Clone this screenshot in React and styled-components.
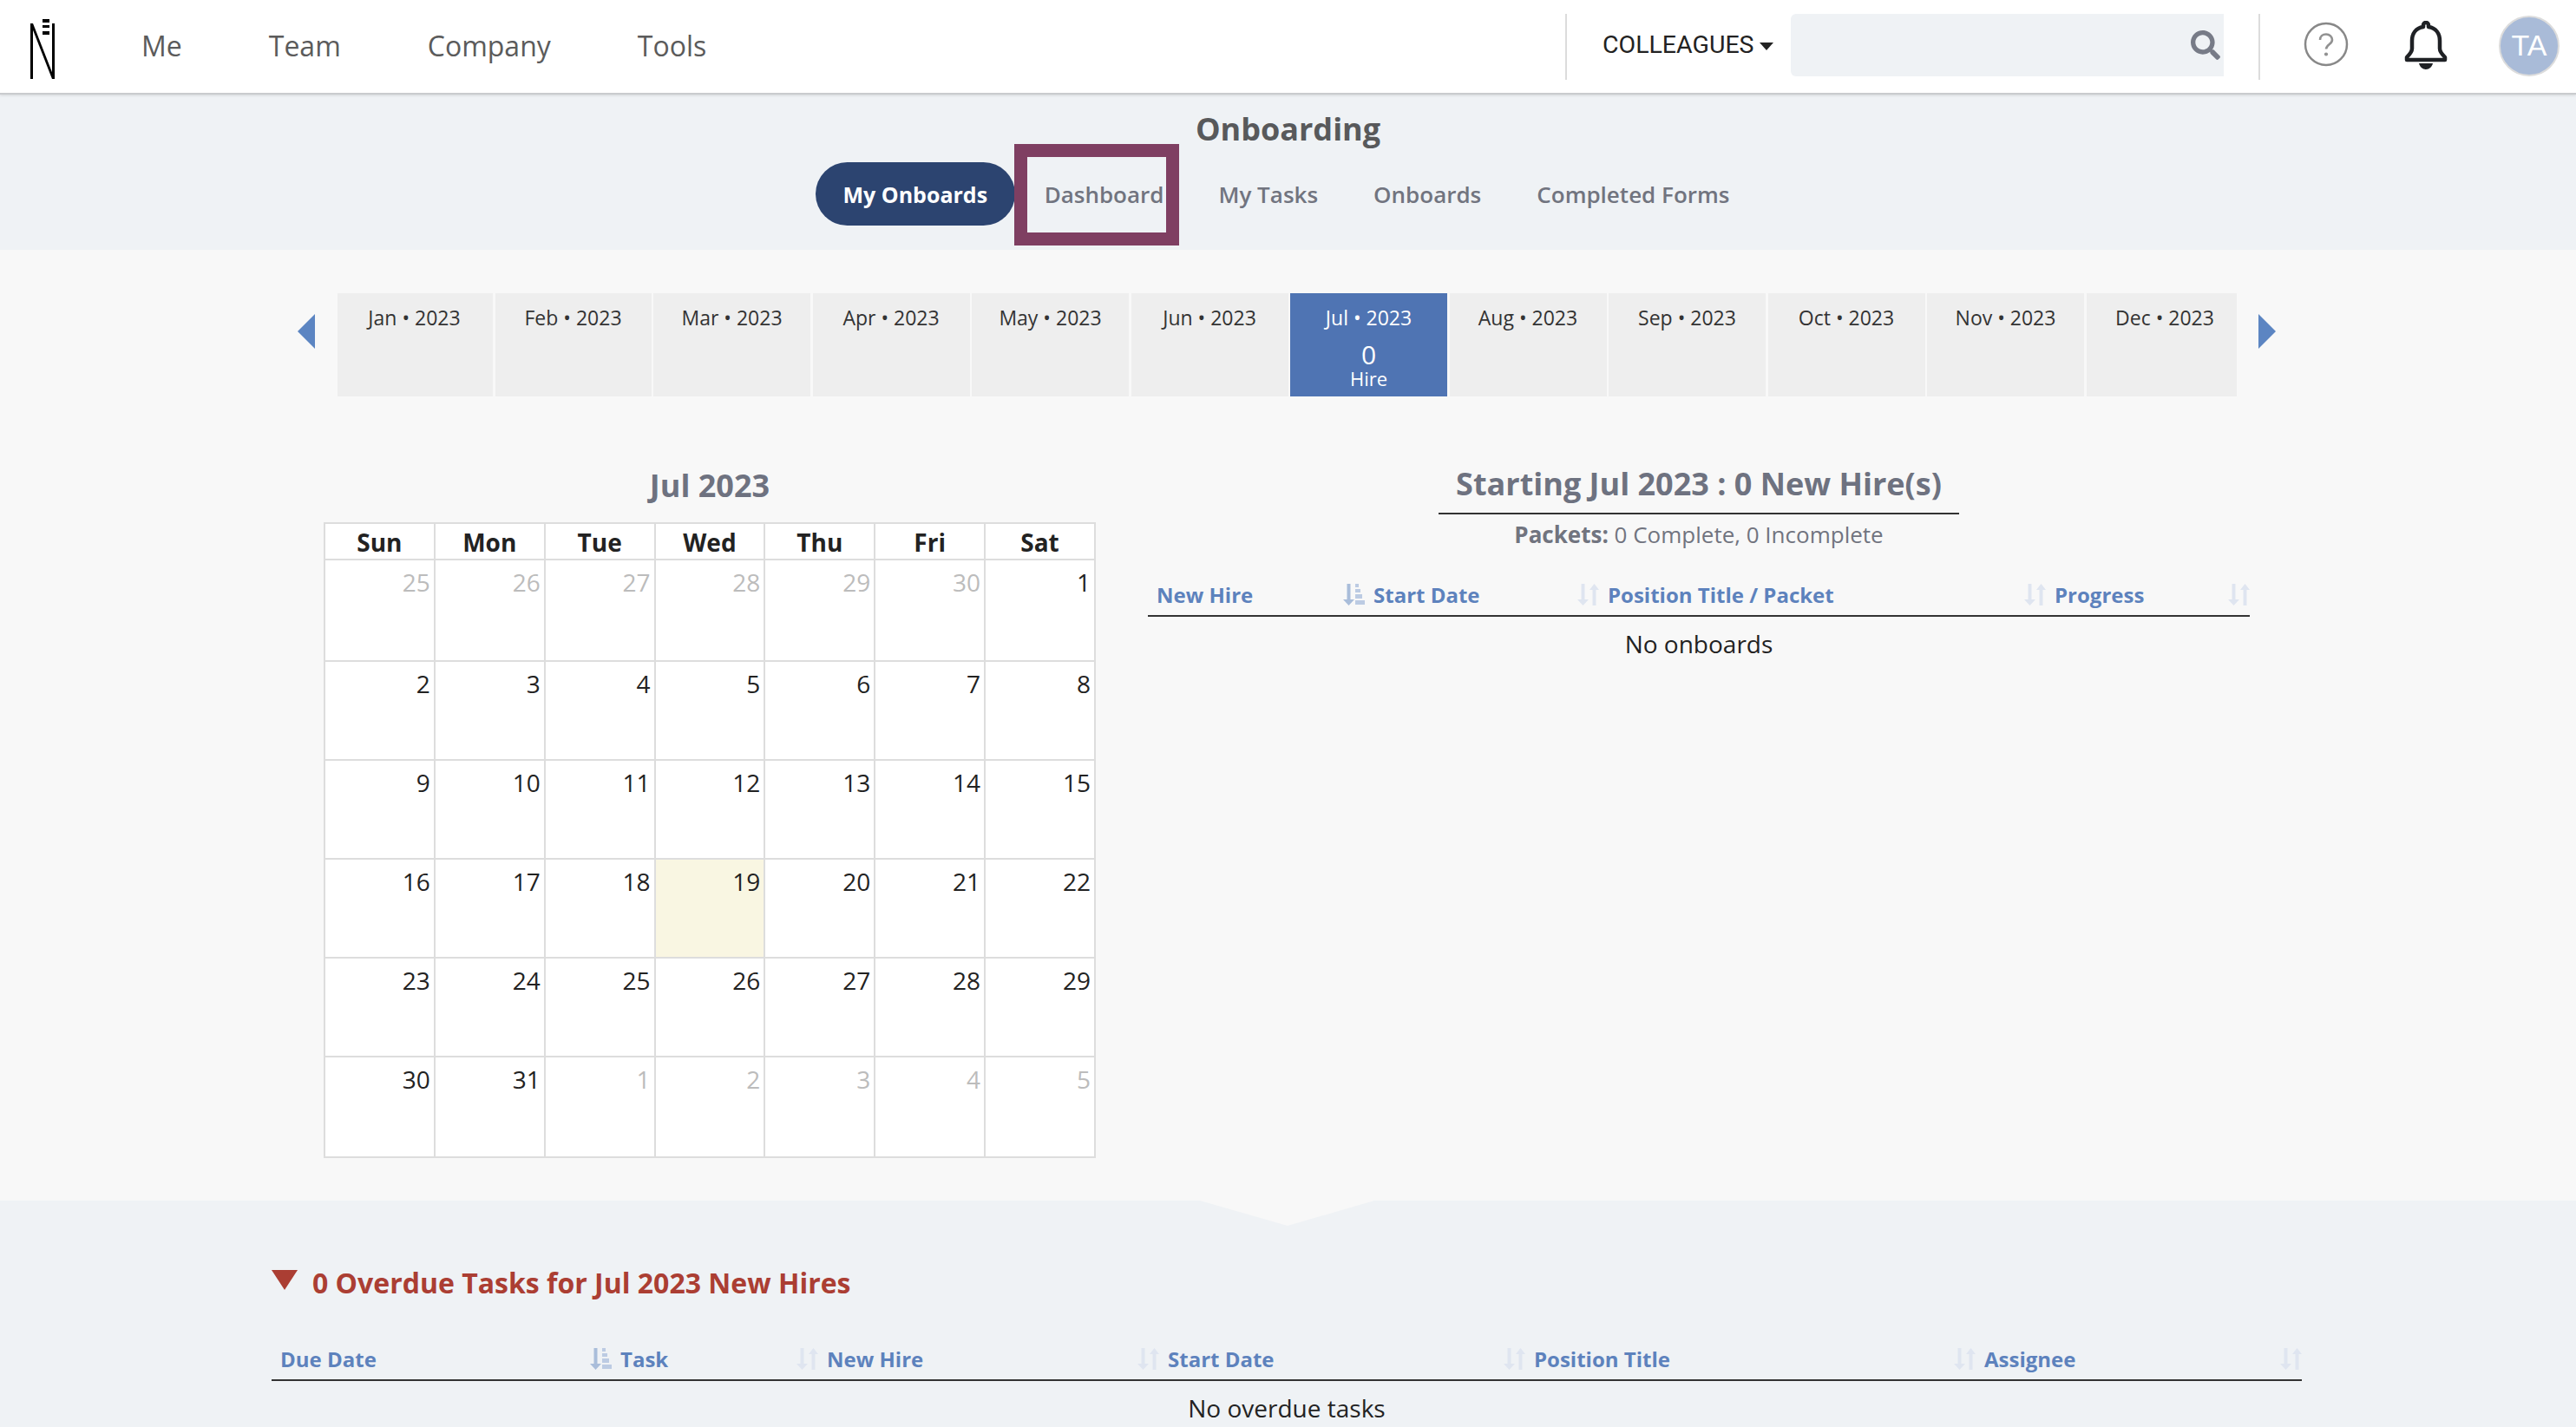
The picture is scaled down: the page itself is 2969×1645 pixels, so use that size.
import React from 'react';
import styled, { createGlobalStyle } from 'styled-components';
import { FaSearch } from 'react-icons/fa';

const GlobalStyle = createGlobalStyle`
  html, body {
    margin: 0;
    padding: 0;
    background: #f8f8f8;
    font-family: "Open Sans", "Liberation Sans", sans-serif;
    overflow: hidden;
  }
  * { box-sizing: border-box; }
`;

const Page = styled.div`
  width: 2969px;
  height: 1645px;
  display: flex;
  flex-direction: column;
`;

/* top bar */
const TopBar = styled.header`
  height: 109px;
  flex: none;
  display: flex;
  align-items: center;
  background: #fff;
  border-bottom: 2px solid #c9cbce;
  box-shadow: 0 1px 3px rgba(0, 0, 0, 0.12);
  position: relative;
  z-index: 2;
`;

const Logo = styled.svg`
  width: 40px;
  height: 76px;
  margin-left: 30px;
  flex: none;
`;

const MainNav = styled.nav`
  display: flex;
  gap: 100px;
  margin: -1px 0 0 93px;
`;

const NavLink = styled.a`
  font-size: 32px;
  color: #5b5b5b;
  line-height: 44px;
`;

const TopRight = styled.div`
  margin-left: auto;
  display: flex;
  align-items: center;
  height: 76px;
`;

const Divider = styled.span`
  width: 2px;
  height: 76px;
  background: #dcdcdc;
  flex: none;
`;

const ScopeButton = styled.div`
  display: flex;
  align-items: center;
  gap: 6px;
  margin: 0 0 4px 41px;
  width: 217px;
  font-family: Roboto, "Liberation Sans", sans-serif;
  font-size: 28.500px;
  color: #222;
`;

const Caret = styled.span`
  width: 0;
  height: 0;
  margin-top: 3px;
  border-left: 8px solid transparent;
  border-right: 8px solid transparent;
  border-top: 9px solid #222;
`;

const SearchBox = styled.div`
  width: 499px;
  height: 72px;
  background: #eff2f5;
  border-radius: 6px 0 0 6px;
  display: flex;
  align-items: center;
  justify-content: flex-end;
  padding-right: 4px;
  margin: 0 40px 4px 0;
  color: #777b87;
`;

const HelpIcon = styled.svg`
  width: 52px;
  height: 52px;
  margin: 0 0 5px 50px;
  flex: none;
`;

const BellIcon = styled.svg`
  width: 50px;
  height: 56px;
  margin: 0 0 3px 64px;
  flex: none;
`;

const Avatar = styled.div`
  width: 70px;
  height: 70px;
  border-radius: 50%;
  background: #a9bbd8;
  border: 2px solid #dcdcdc;
  color: #fff;
  font-family: "Liberation Sans", sans-serif;
  font-size: 34px;
  display: flex;
  align-items: center;
  justify-content: center;
  margin: 0 19px 2px 59px;
`;

/* onboarding sub header */
const SubHeader = styled.section`
  height: 179px;
  flex: none;
  background: #eff2f5;
  display: flex;
  flex-direction: column;
  align-items: center;
`;

const PageTitle = styled.h1`
  margin: 1px 0 0;
  font-size: 36px;
  line-height: 77px;
  font-weight: 700;
  color: #58595b;
`;

const Tabs = styled.div`
  align-self: flex-start;
  margin: 0 0 0 940px;
  display: flex;
  align-items: center;
`;

const Tab = styled.a`
  position: relative;
  height: 73px;
  display: flex;
  align-items: center;
  padding: ${p => p.$pad || '0 32px'};
  border-radius: 37px;
  font-size: ${p => (p.$active ? 25 : 26)}px;
  font-weight: ${p => (p.$active ? 700 : 600)};
  color: ${p => (p.$active ? '#fff' : '#71747f')};
  background: ${p => (p.$active ? '#2c4470' : 'transparent')};
`;

const Highlight = styled.span`
  position: absolute;
  left: -1px;
  top: -21px;
  width: 190px;
  height: 117px;
  border: 15px solid #7f3f62;
  pointer-events: none;
`;

/* month strip + calendar + list */
const Main = styled.main`
  flex: 1;
  padding-top: 50px;
`;

const MonthRow = styled.div`
  display: flex;
  align-items: flex-start;
  height: 119px;
  padding-left: 343px;
`;

const StripArrow = styled.span`
  width: 0;
  height: 0;
  margin-top: 24px;
  border-top: 20px solid transparent;
  border-bottom: 20px solid transparent;
  ${p => (p.$right
    ? 'border-left: 20px solid #5c85c2; margin-left: 25px;'
    : 'border-right: 20px solid #5c85c2; margin-right: 26px;')}
`;

const MonthStrip = styled.div`
  display: grid;
  grid-template-columns: 179px 180px repeat(9, 181px) 173px;
  column-gap: 2.5px;
  height: 119px;
`;

const MonthTile = styled.div`
  background: ${p => (p.$active ? '#4f74b3' : '#eeeeee')};
  color: ${p => (p.$active ? '#fff' : '#333')};
  text-align: center;
  padding-top: 11px;
  font-size: 23px;
  line-height: 34px;

  &:first-child { padding-right: 2px; }
  &:last-child { padding-left: 8px; }
`;

const TileCount = styled.div`
  font-size: 30px;
  line-height: 34px;
  margin-top: 9px;
`;

const TileLabel = styled.div`
  font-size: 22px;
  line-height: 20px;
`;

const Columns = styled.div`
  display: flex;
  align-items: flex-start;
  margin-top: 79px;
  padding-left: 373px;
`;

const CalendarBlock = styled.div`
  width: 890px;
  flex: none;
`;

const CalendarTitle = styled.h2`
  margin: 0;
  height: 66px;
  text-align: center;
  font-size: 36px;
  line-height: 48px;
  font-weight: 700;
  color: #6e7280;
`;

const CalendarTable = styled.table`
  width: 890px;
  border-collapse: collapse;
  table-layout: fixed;
  background: #fff;
`;

const DayHead = styled.th`
  height: 42px;
  padding: 2px 0 0;
  border: 2px solid #dddddd;
  font-size: 28px;
  line-height: 36px;
  font-weight: 700;
  color: #222;
`;

const DayCell = styled.td`
  height: ${p => (p.$tall ? 117 : p.$last ? 116 : 114)}px;
  padding: 5px 4px 0 0;
  border: 2px solid #dddddd;
  text-align: right;
  vertical-align: top;
  font-size: 28px;
  line-height: 40px;
  color: ${p => (p.$muted ? '#bcbcbc' : '#222')};
  background: ${p => (p.$today ? '#f9f6e2' : '#fff')};
`;

const ListBlock = styled.div`
  width: 1270px;
  margin-left: 60px;
  display: flex;
  flex-direction: column;
  align-items: center;
`;

const ListTitle = styled.h2`
  margin: -6px 0 0;
  width: 600px;
  height: 63px;
  border-bottom: 2px solid #333;
  text-align: center;
  font-size: 36px;
  line-height: 56px;
  font-weight: 700;
  color: #6e7280;
  white-space: nowrap;
`;

const PacketLine = styled.p`
  margin: 3px 0 0;
  font-size: 26px;
  line-height: 40px;
  color: #71747f;

  b { font-weight: 700; }
`;

const HeadRow = styled.div`
  display: grid;
  width: 100%;
  grid-template-columns: ${p => p.$cols};
  height: ${p => p.$h}px;
  border-bottom: 2px solid #333;
  align-items: center;
  margin-top: ${p => p.$top}px;
`;

const HeadCell = styled.div`
  display: flex;
  align-items: center;
  justify-content: space-between;
  padding-left: 10px;
  font-size: 24px;
  font-weight: 700;
  color: #5d82bd;
`;

const SortGlyph = styled.svg`
  width: 25px;
  height: 25px;
  flex: none;
`;

const EmptyRow = styled.div`
  text-align: center;
  font-size: 28px;
  line-height: 40px;
  color: #222;
  width: 100%;
  margin-top: ${p => p.$top}px;
`;

/* overdue section */
const Overdue = styled.section`
  position: relative;
  height: 261px;
  flex: none;
  background: #eff2f5;
  padding: 73px 316px 0 313px;

  &::before {
    content: '';
    position: absolute;
    top: 0;
    left: 1383px;
    width: 0;
    height: 0;
    border-left: 101px solid transparent;
    border-right: 100px solid transparent;
    border-top: 29px solid #f8f8f8;
  }
`;

const OverdueTitle = styled.h3`
  margin: 0;
  display: flex;
  align-items: center;
  gap: 17px;
  font-size: 32px;
  line-height: 44px;
  font-weight: 700;
  color: #ab3e33;
`;

const RedTriangle = styled.span`
  width: 0;
  height: 0;
  margin-top: -8px;
  border-left: 15px solid transparent;
  border-right: 15px solid transparent;
  border-top: 23px solid #ab3e33;
`;

function SortIcon({ active }) {
  const down = active ? '#a9bdda' : '#dfe5f0';
  return (
    <SortGlyph viewBox="0 0 25 25">
      <path d="M4.500 0h4v18H13l-6.500 7L0 18h4.500z" fill={down} />
      {active ? (
        <g fill="#bccbe3">
          <rect x="14" y="0" width="4" height="4" />
          <rect x="14" y="6" width="6" height="4" />
          <rect x="14" y="12" width="8" height="5" />
          <rect x="14" y="19" width="11" height="5" />
        </g>
      ) : (
        <path d="M17.500 25h4V7H25L19.500 0 14 7h3.500z" fill={down} />
      )}
    </SortGlyph>
  );
}

const months = ['Jan', 'Feb', 'Mar', 'Apr', 'May', 'Jun', 'Jul', 'Aug', 'Sep', 'Oct', 'Nov', 'Dec'];
const weekdays = ['Sun', 'Mon', 'Tue', 'Wed', 'Thu', 'Fri', 'Sat'];

const weeks = [
  [[25, 1], [26, 1], [27, 1], [28, 1], [29, 1], [30, 1], [1]],
  [[2], [3], [4], [5], [6], [7], [8]],
  [[9], [10], [11], [12], [13], [14], [15]],
  [[16], [17], [18], [19], [20], [21], [22]],
  [[23], [24], [25], [26], [27], [28], [29]],
  [[30], [31], [1, 1], [2, 1], [3, 1], [4, 1], [5, 1]],
];

const listHead = [['New Hire', true], ['Start Date'], ['Position Title / Packet'], ['Progress']];
const overdueHead = [['Due Date', true], ['Task'], ['New Hire'], ['Start Date'], ['Position Title'], ['Assignee']];

export default function App() {
  return (
    <Page>
      <GlobalStyle />
      <TopBar>
        <Logo viewBox="0 0 40 76">
          <g fill="#000">
            <rect x="5" y="11" width="3" height="64" />
            <rect x="30" y="11" width="3" height="64" />
            <path d="M5 11h3l25 64h-3z" />
            <rect x="19" y="6" width="8" height="4" />
            <rect x="19" y="13" width="8" height="3" />
            <rect x="19" y="20" width="8" height="4" />
          </g>
        </Logo>
        <MainNav>
          <NavLink>Me</NavLink>
          <NavLink>Team</NavLink>
          <NavLink>Company</NavLink>
          <NavLink>Tools</NavLink>
        </MainNav>
        <TopRight>
          <Divider />
          <ScopeButton>COLLEAGUES<Caret /></ScopeButton>
          <SearchBox><FaSearch size={34} /></SearchBox>
          <Divider />
          <HelpIcon viewBox="0 0 52 52">
            <circle cx="26" cy="26" r="24" fill="none" stroke="#888" strokeWidth="2.500" />
            <path d="M19 21c0-4 3-6.500 7-6.500s7 2.800 7 6.500c0 5-7 5.500-7 10.500" fill="none" stroke="#919191" strokeWidth="2.600" />
            <circle cx="26" cy="37.500" r="2.100" fill="#919191" />
          </HelpIcon>
          <BellIcon viewBox="0 0 50 56">
            <path d="M25 2a3 3 0 0 1 3 3v2c9 1.500 13 8 13 16v9c0 4 3 7 6 10v3H3v-3c3-3 6-6 6-10v-9c0-8 4-14.500 13-16V5a3 3 0 0 1 3-3z" fill="none" stroke="#1f2125" strokeWidth="4.500" strokeLinejoin="round" />
            <path d="M17 49h16c-1 4-4 7-8 7s-7-3-8-7z" fill="#1f2125" />
          </BellIcon>
          <Avatar>TA</Avatar>
        </TopRight>
      </TopBar>

      <SubHeader>
        <PageTitle>Onboarding</PageTitle>
        <Tabs>
          <Tab $active $pad="0 31.500px">My Onboards</Tab>
          <Tab $pad="0 31px 0 34px">
            Dashboard
            <Highlight />
          </Tab>
          <Tab>My Tasks</Tab>
          <Tab>Onboards</Tab>
          <Tab>Completed Forms</Tab>
        </Tabs>
      </SubHeader>

      <Main>
        <MonthRow>
          <StripArrow />
          <MonthStrip>
            {months.map(m => (
              <MonthTile key={m} $active={m === 'Jul'}>
                {m} • 2023
                {m === 'Jul' && (
                  <>
                    <TileCount>0</TileCount>
                    <TileLabel>Hire</TileLabel>
                  </>
                )}
              </MonthTile>
            ))}
          </MonthStrip>
          <StripArrow $right />
        </MonthRow>

        <Columns>
          <CalendarBlock>
            <CalendarTitle>Jul 2023</CalendarTitle>
            <CalendarTable>
              <thead>
                <tr>{weekdays.map(d => <DayHead key={d}>{d}</DayHead>)}</tr>
              </thead>
              <tbody>
                {weeks.map((week, i) => (
                  <tr key={i}>
                    {week.map(([day, muted]) => (
                      <DayCell
                        key={day}
                        $tall={i === 0}
                        $last={i === weeks.length - 1}
                        $muted={!!muted}
                        $today={day === 19}
                      >
                        {day}
                      </DayCell>
                    ))}
                  </tr>
                ))}
              </tbody>
            </CalendarTable>
          </CalendarBlock>

          <ListBlock>
            <ListTitle>Starting Jul 2023 : 0 New Hire(s)</ListTitle>
            <PacketLine><b>Packets:</b> 0 Complete, 0 Incomplete</PacketLine>
            <HeadRow $cols="250px 270px 515px 235px" $h={50} $top={25}>
              {listHead.map(([label, active]) => (
                <HeadCell key={label}>{label}<SortIcon active={active} /></HeadCell>
              ))}
            </HeadRow>
            <EmptyRow $top={11}>No onboards</EmptyRow>
          </ListBlock>
        </Columns>
      </Main>

      <Overdue>
        <OverdueTitle><RedTriangle />0 Overdue Tasks for Jul 2023 New Hires</OverdueTitle>
        <HeadRow $cols="392px 238px 393px 422px 519px 376px" $h={50} $top={41}>
          {overdueHead.map(([label, active]) => (
            <HeadCell key={label}>{label}<SortIcon active={active} /></HeadCell>
          ))}
        </HeadRow>
        <EmptyRow $top={11}>No overdue tasks</EmptyRow>
      </Overdue>
    </Page>
  );
}
